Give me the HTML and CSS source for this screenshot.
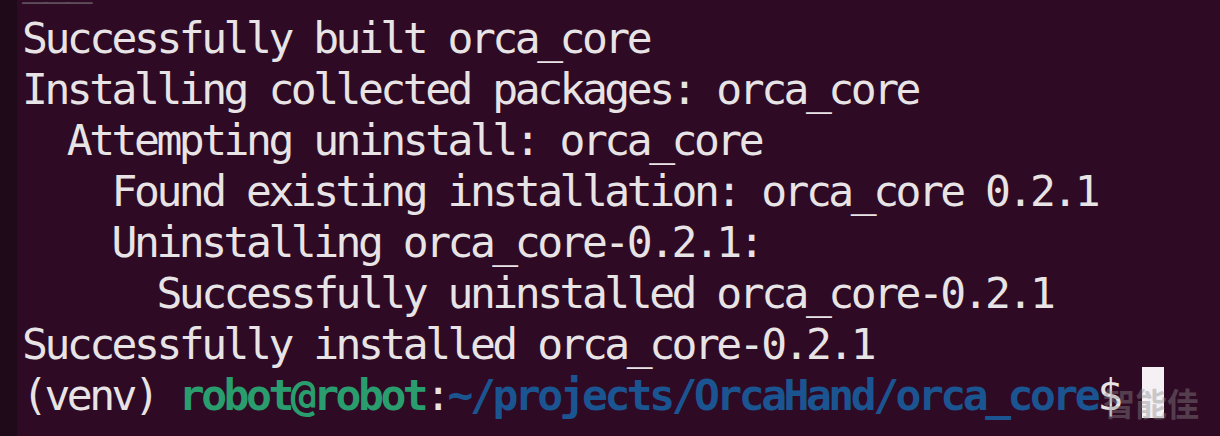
FILE: index.html
```html
<!DOCTYPE html>
<html>
<head>
<meta charset="utf-8">
<link rel="stylesheet" href="styles.css">
</head>
<body>
<div class="window">
  <div class="term">
    <div class="line faded">___</div>
    <div class="line">Successfully built orca_core</div>
    <div class="line">Installing collected packages: orca_core</div>
    <div class="line">  Attempting uninstall: orca_core</div>
    <div class="line">    Found existing installation: orca_core 0.2.1</div>
    <div class="line">    Uninstalling orca_core-0.2.1:</div>
    <div class="line">      Successfully uninstalled orca_core-0.2.1</div>
    <div class="line">Successfully installed orca_core-0.2.1</div>
    <div class="line">(venv) <span class="user">robot@robot</span>:<span class="path">~/projects/OrcaHand/orca_core</span>$ <span class="cursor"> </span></div>
  </div>
  <div class="watermark">智能佳</div>
</div>
</body>
</html>
```
FILE: styles.css
```css
html, body {
  margin: 0;
  padding: 0;
  background: #2f0a24;
}
.window {
  position: relative;
  box-sizing: border-box;
  width: 1220px;
  height: 436px;
  overflow: hidden;
  background: #2f0a24;
  border-left: 17px solid #1f0a19;
  padding-left: 5px;
}
.term {
  margin-top: -54px;
  font-family: "DejaVu Sans Mono", monospace;
  font-size: 43px;
  letter-spacing: -3.49px;
  color: #e8e4e6;
}
.line {
  line-height: 51px;
  white-space: pre;
}
.faded {
  line-height: 67px;
  color: #5f4f5c;
}
.user {
  color: #2a9d6e;
  font-weight: bold;
}
.path {
  color: #1b5591;
  font-weight: bold;
}
.cursor {
  display: inline-block;
  width: 22px;
  height: 51px;
  margin-top: -3px;
  vertical-align: top;
  background: #f4f0f4;
}
.watermark {
  position: absolute;
  left: 1086px;
  top: 385px;
  font-family: "Noto Sans CJK SC", sans-serif;
  font-weight: bold;
  font-size: 32px;
  line-height: 34px;
  color: rgba(140, 140, 140, 0.42);
}
```
